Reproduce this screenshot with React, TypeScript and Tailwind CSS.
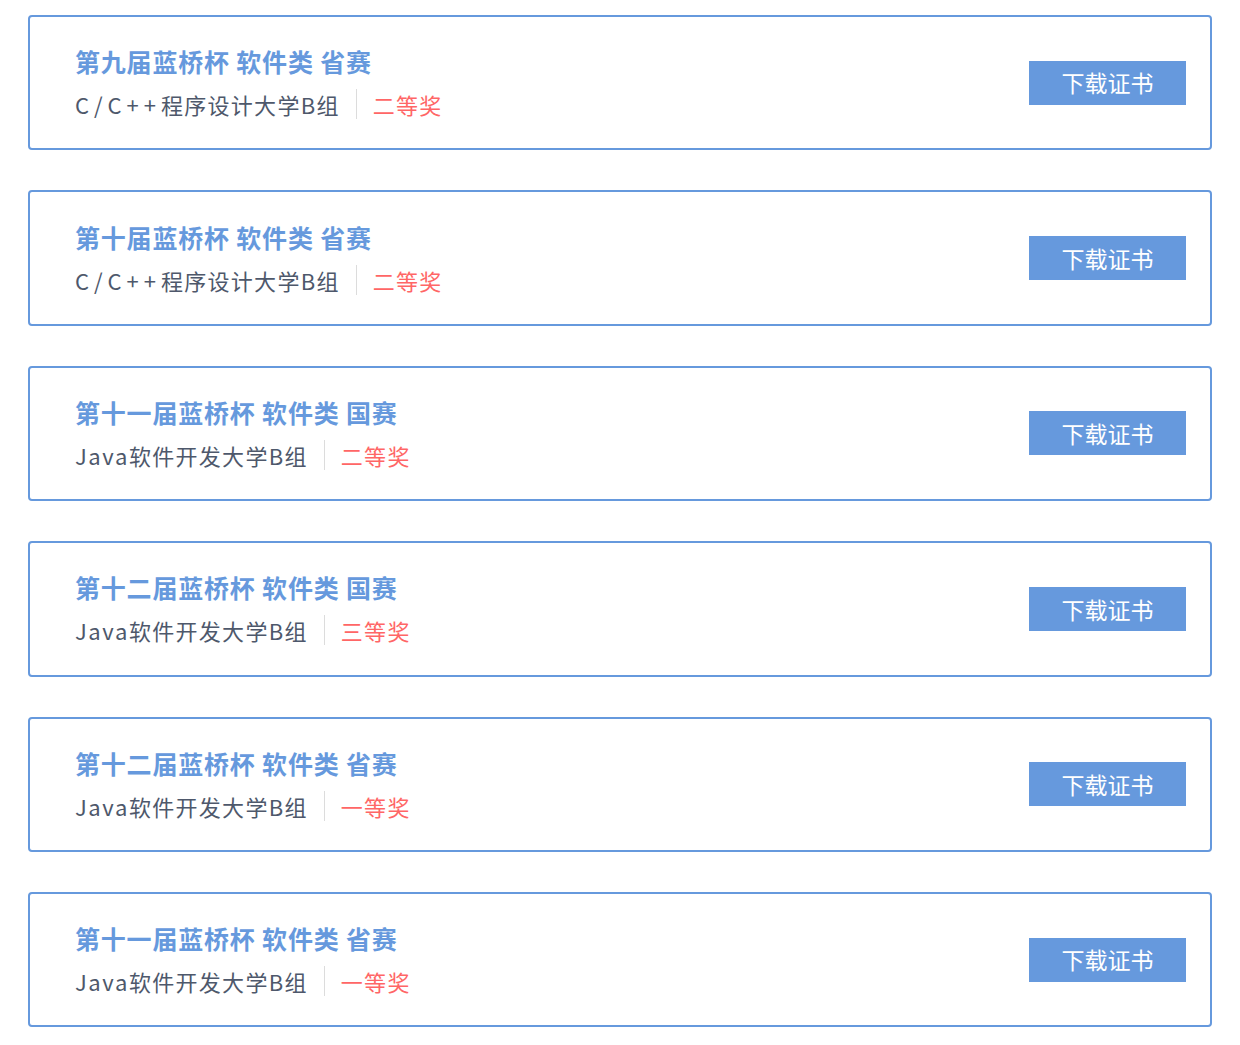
import React from 'react';

const awards = [
  { title: '第九届蓝桥杯 软件类 省赛', lang: 'C/C++', group: '程序设计大学B组', prize: '二等奖' },
  { title: '第十届蓝桥杯 软件类 省赛', lang: 'C/C++', group: '程序设计大学B组', prize: '二等奖' },
  { title: '第十一届蓝桥杯 软件类 国赛', lang: 'Java', group: '软件开发大学B组', prize: '二等奖' },
  { title: '第十二届蓝桥杯 软件类 国赛', lang: 'Java', group: '软件开发大学B组', prize: '三等奖' },
  { title: '第十二届蓝桥杯 软件类 省赛', lang: 'Java', group: '软件开发大学B组', prize: '一等奖' },
  { title: '第十一届蓝桥杯 软件类 省赛', lang: 'Java', group: '软件开发大学B组', prize: '一等奖' },
];

export default function App() {
  return (
    <div
      className="min-h-screen bg-white px-[28px] pt-[15px]"
      style={{ fontFamily: '"Noto Sans CJK SC", "Noto Sans", sans-serif' }}
    >
      <div className="flex flex-col gap-[40px]">
        {awards.map((a, i) => (
          <div
            key={i}
            className="flex h-[135.4px] items-center justify-between rounded-[4px] border-2 border-[#6699dd] pl-[45px] pr-[24px]"
          >
            <div className="flex flex-col">
              <h3 className="text-[25px] font-bold leading-[32px] tracking-[0.8px] text-[#6699dd]">{a.title}</h3>
              <div className="mt-[11px] flex items-center text-[22px] leading-[32px] tracking-[1.3px]">
                <span className="text-[#4e586b]">
                  <span className={a.lang === 'Java' ? 'tracking-[1.6px]' : 'tracking-[5px]'}>{a.lang}</span>
                  {a.group}
                </span>
                <span className="mx-[16px] h-[30px] w-px bg-[#dcdcdc]" />
                <span className="text-[#ff6666]">{a.prize}</span>
              </div>
            </div>
            <button className="flex h-[44px] w-[157px] items-center justify-center bg-[#6699dd] text-[23px] text-white">
              下载证书
            </button>
          </div>
        ))}
      </div>
    </div>
  );
}
